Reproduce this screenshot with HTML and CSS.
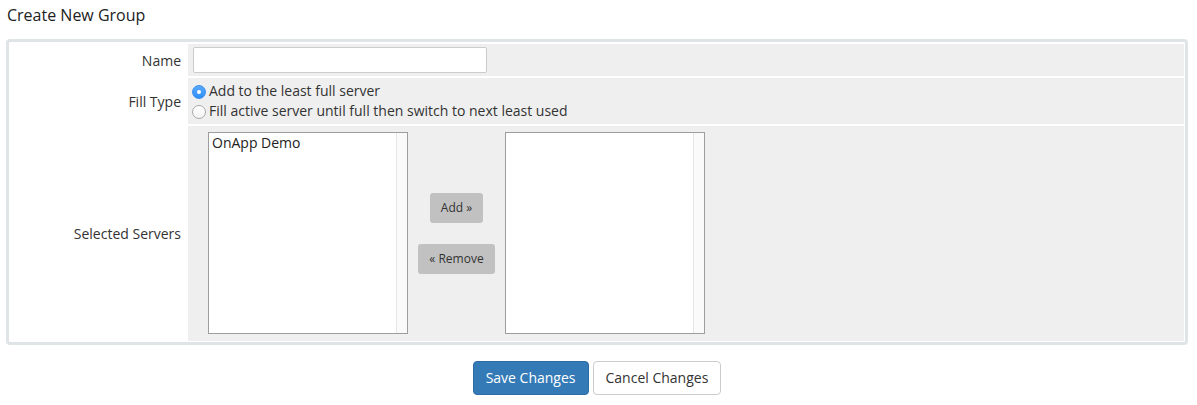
FILE: index.html
```html
<!DOCTYPE html>
<html lang="en">
<head>
<meta charset="utf-8">
<title>Create New Group</title>
<link rel="stylesheet" href="styles.css">
</head>
<body>
<div class="page">
  <h2 class="title">Create New Group</h2>
  <div class="panel">
    <div class="form">
      <div class="label">Name</div>
      <div class="field field-name"><input class="text-input" type="text" value=""></div>

      <div class="label">Fill Type</div>
      <div class="field field-radios">
        <label class="radio-line"><span class="radio checked"></span>Add to the least full server</label>
        <label class="radio-line"><span class="radio"></span>Fill active server until full then switch to next least used</label>
      </div>

      <div class="label">Selected Servers</div>
      <div class="field field-servers">
        <div class="listbox">
          <div class="options"><div class="option">OnApp Demo</div></div>
          <div class="track"></div>
        </div>
        <div class="move-buttons">
          <button class="move-btn" type="button">Add &raquo;</button>
          <button class="move-btn" type="button">&laquo; Remove</button>
        </div>
        <div class="listbox">
          <div class="options"></div>
          <div class="track"></div>
        </div>
      </div>
    </div>
  </div>
  <div class="actions">
    <button class="btn btn-primary" type="button">Save Changes</button>
    <button class="btn btn-default" type="button">Cancel Changes</button>
  </div>
</div>
</body>
</html>
```
FILE: styles.css
```css
* { box-sizing: border-box; }
html, body { margin: 0; padding: 0; background: #fff; }
body {
  font-family: "Open Sans", "Liberation Sans", Arial, sans-serif;
  color: #333;
  font-size: 14px;
}
.page {
  width: 1182px;
  margin-left: 6px;
}
.title {
  font-size: 16px;
  font-weight: normal;
  line-height: 22px;
  margin: 4px 0 13px 1px;
  color: #222;
}
.panel {
  border: 3px solid #dfe4e6;
  border-radius: 4px;
  padding: 2px 1px 1px 2px;
  height: 306px;
}
.form {
  display: grid;
  grid-template-columns: 175px 1fr;
  grid-template-rows: 32px 46px 215px;
  gap: 2px;
}
.label {
  display: flex;
  align-items: center;
  justify-content: flex-end;
  padding-right: 5px;
  font-size: 14px;
  color: #333;
}
.field {
  background: #efefef;
  padding: 3px 4px;
}
.text-input {
  display: block;
  margin: 0 0 0 1px;
  width: 294px;
  height: 26px;
  border: 1px solid #ccc;
  border-radius: 2px;
  background: #fff;
  font-family: inherit;
  font-size: 14px;
  padding: 2px 4px;
}
.field-radios {
  display: flex;
  flex-direction: column;
}
.radio-line {
  display: flex;
  align-items: flex-start;
  height: 20px;
  line-height: 20px;
  font-size: 14px;
  color: #333;
  white-space: nowrap;
}
.radio {
  width: 14px;
  height: 14px;
  margin: 4px 3px 0 0;
  border-radius: 50%;
  border: 1px solid #a9a9a9;
  background: linear-gradient(#fff, #f3f3f3);
  flex: none;
  position: relative;
}
.radio.checked {
  border-color: #3a8ef0;
  background: linear-gradient(#5aa9fb, #2f8ef7);
}
.radio.checked::after {
  content: "";
  position: absolute;
  left: 4px;
  top: 4px;
  width: 4px;
  height: 4px;
  border-radius: 50%;
  background: #fff;
}
.field-servers {
  display: flex;
  align-items: center;
  padding: 6px 0 7px 20px;
}
.listbox {
  display: flex;
  width: 200px;
  height: 202px;
  border: 1px solid #9d9d9d;
  background: #fff;
}
.options {
  flex: 1;
}
.option {
  padding: 0 3px;
  line-height: 19px;
  font-size: 14px;
  color: #222;
}
.track {
  width: 11px;
  background: #fafafa;
  border-left: 1px solid #e6e6e6;
}
.move-buttons {
  width: 97px;
  display: flex;
  flex-direction: column;
  align-items: center;
  gap: 21px;
}
.move-btn {
  height: 30px;
  padding: 0 11px;
  border: none;
  border-radius: 3px;
  background: #c1c1c1;
  color: #333;
  font-family: inherit;
  font-size: 12px;
  line-height: 30px;
}
.actions {
  display: flex;
  justify-content: center;
  gap: 4px;
  margin-top: 16px;
}
.btn {
  height: 34px;
  padding: 0 12px;
  font-family: inherit;
  font-size: 14px;
  line-height: 32px;
  border-radius: 4px;
  border: 1px solid transparent;
}
.btn-primary {
  background: #337ab7;
  border-color: #2e6da4;
  color: #fff;
}
.btn-default {
  background: #fff;
  border-color: #ccc;
  color: #333;
}
```
